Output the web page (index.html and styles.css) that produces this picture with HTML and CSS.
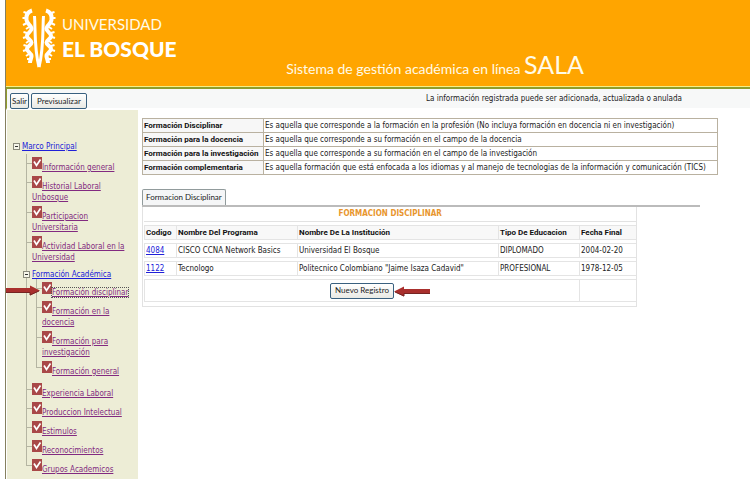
FILE: index.html
```html
<!DOCTYPE html>
<html lang="es">
<head>
<meta charset="utf-8">
<title>SALA - Universidad El Bosque</title>
<link rel="stylesheet" href="styles.css">
</head>
<body>
<svg class="defs" aria-hidden="true">
  <symbol id="check" viewBox="0 0 10 12"><rect width="10" height="12" fill="#a94848"/><path d="M2 4.5 4.5 8.5 8.5 2.5" fill="none" stroke="#fff" stroke-width="1.7"/></symbol>
  <symbol id="arrow" viewBox="0 0 36 11"><path d="M0 3H26V.5L36 5.5 26 10.5V8H0Z" fill="#a92f2d"/><path d="M0 7.5H26V10L35 6" fill="none" stroke="#752422"/></symbol>
</svg>
<div class="page">
  <header class="banner">
    <div class="brand">
      <svg class="emblem" viewBox="0 0 34 60" aria-hidden="true">
        <g id="half" fill="none" stroke="#fff" stroke-linejoin="round"><path d="M10 2.5C5 4 4 8 4.500 12C5 16 10 18 9.500 21C9 24 5 25 5 28C5 31 9.500 32 9.500 34.500C9.500 37 5 38 5 41C5 44 9.500 45 9.500 48C9.500 50 8 52 8 55" stroke-width="4"/><path d="M5 5 1.500 4M4 10 .5 10M5 15 1 17M7 19 4 21M5 25 1.500 24M4 29 1 30M7 33 4 35M5 38 1.500 37M4 42 1 43M7 46 4 48M9 51 5 51" stroke-width="2"/><path d="M12.500 8C13.500 20 12 40 17 59" stroke-width="3"/></g>
        <use href="#half" transform="translate(34 0) scale(-1 1)"/>
      </svg>
      <div class="wordmark"><span class="uni">UNIVERSIDAD</span><strong class="bosque">EL BOSQUE</strong></div>
    </div>
    <h1 class="system">Sistema de gestión académica en línea <span class="sala">SALA</span></h1>
  </header>
  <div class="toolbar">
    <button type="button" class="btn tight">Salir</button>
    <button type="button" class="btn">Previsualizar</button>
    <p class="notice">La información registrada puede ser adicionada, actualizada o anulada</p>
  </div>
  <div class="body">
    <nav class="sidebar">
      <div class="root"><span class="toggle"></span><a href="#">Marco Principal</a></div>
      <ul class="tree">
        <li><svg class="check"><use href="#check"/></svg><a href="#">Información general</a></li>
        <li><svg class="check"><use href="#check"/></svg><a href="#">Historial Laboral<br>Unbosque</a></li>
        <li><svg class="check"><use href="#check"/></svg><a href="#">Participacion<br>Universitaria</a></li>
        <li><svg class="check"><use href="#check"/></svg><a href="#">Actividad Laboral en la<br>Universidad</a></li>
        <li class="branch"><div class="branch-name"><span class="toggle"></span><a href="#">Formación Académica</a></div>
          <ul class="tree">
            <li><svg class="check"><use href="#check"/></svg><a href="#" class="current">Formación disciplinar</a><svg class="arrow to-link"><use href="#arrow"/></svg></li>
            <li><svg class="check"><use href="#check"/></svg><a href="#">Formación en la<br>docencia</a></li>
            <li><svg class="check"><use href="#check"/></svg><a href="#">Formación para<br>investigación</a></li>
            <li><svg class="check"><use href="#check"/></svg><a href="#">Formación general</a></li>
          </ul>
        </li>
        <li><svg class="check"><use href="#check"/></svg><a href="#">Experiencia Laboral</a></li>
        <li><svg class="check"><use href="#check"/></svg><a href="#">Produccion Intelectual</a></li>
        <li><svg class="check"><use href="#check"/></svg><a href="#">Estimulos</a></li>
        <li><svg class="check"><use href="#check"/></svg><a href="#">Reconocimientos</a></li>
        <li><svg class="check"><use href="#check"/></svg><a href="#">Grupos Academicos</a></li>
      </ul>
    </nav>
    <main class="content">
      <table class="info">
        <tr><th scope="row">Formación Disciplinar</th><td>Es aquella que corresponde a la formación en la profesión (No incluya formación en docencia ni en investigación)</td></tr>
        <tr><th scope="row">Formación para la docencia</th><td>Es aquella que corresponde a su formación en el campo de la docencia</td></tr>
        <tr><th scope="row">Formación para la investigación</th><td>Es aquella que corresponde a su formación en el campo de la investigación</td></tr>
        <tr><th scope="row">Formación complementaria</th><td>Es aquella formación que está enfocada a los idiomas y al manejo de tecnologias de la información y comunicación (TICS)</td></tr>
      </table>
      <div class="tabs"><button type="button" class="tab">Formacion Disciplinar</button></div>
      <section class="panel">
        <h2 class="panel-title">FORMACION DISCIPLINAR</h2>
        <table class="records">
          <colgroup><col class="c1"><col class="c2"><col class="c3"><col class="c4"><col class="c5"></colgroup>
          <thead><tr><th>Codigo</th><th>Nombre Del Programa</th><th>Nombre De La Institución</th><th>Tipo De Educacion</th><th>Fecha Final</th></tr></thead>
          <tbody>
            <tr><td><a href="#">4084</a></td><td>CISCO CCNA Network Basics</td><td>Universidad El Bosque</td><td>DIPLOMADO</td><td>2004-02-20</td></tr>
            <tr><td><a href="#">1122</a></td><td>Tecnologo</td><td>Politecnico Colombiano "Jaime Isaza Cadavid"</td><td>PROFESIONAL</td><td>1978-12-05</td></tr>
            <tr class="actions"><td colspan="4"><span class="new"><button type="button" class="btn">Nuevo Registro</button><svg class="arrow to-button"><use href="#arrow"/></svg></span></td><td></td></tr>
          </tbody>
        </table>
      </section>
    </main>
  </div>
</div>
</body>
</html>
```
FILE: styles.css
```css
* { box-sizing: border-box; }
body { margin: 0; background: #fff; color: #222; font: 8px/11px "DejaVu Sans Condensed", "DejaVu Sans", sans-serif; }
h1, h2, p, ul { margin: 0; padding: 0; font-weight: normal; }
ul { list-style: none; }
a { color: #2020d8; }
.defs { position: absolute; width: 0; height: 0; }
.page { margin-left: 5px; border-left: 1px solid #85805f; min-height: 100vh; overflow: hidden; }

.banner { display: flex; justify-content: space-between; height: 89px; padding: 8px 166px 0 16px; background: #ffa500; border-bottom: 2px solid #8f9d2c; box-shadow: inset 0 -1px #f6ef86; color: #fffbe8; }
.brand { display: flex; gap: 6px; }
.emblem { width: 34px; height: 60px; }
.wordmark { display: flex; flex-direction: column; padding-top: 6px; font-family: Lato, sans-serif; }
.uni { font-size: 15px; line-height: 20px; }
.bosque { font-size: 21px; line-height: 30px; font-weight: 900; color: #fff; }
.system { align-self: flex-start; padding-top: 39px; font: 14px/34px Lato, sans-serif; white-space: nowrap; }
.sala { font-size: 25px; }

.toolbar { display: flex; align-items: flex-start; gap: 2px; height: 21px; padding: 4px 68px 0 3px; background: #f7f8f8; border-left: 1px solid #8f9d2c; border-bottom: 2px solid #fff; }
.btn { height: 16px; padding: 0 5px; border: 1px solid #39607f; border-radius: 2px; background: linear-gradient(#fff, #e9e9e4); color: #222; font: 8px/13px Lato, sans-serif; white-space: nowrap; }
.btn.tight { padding: 0 1px; }
.notice { margin-left: auto; }

.body { display: flex; align-items: stretch; min-height: calc(100vh - 110px); }
.sidebar { flex: none; width: 131px; margin-left: 1px; padding: 31px 0 0 6px; background: #ededd6; white-space: nowrap; }
.root { display: flex; align-items: center; gap: 2px; height: 11px; margin-bottom: 5px; }
.toggle { width: 7px; height: 7px; border: 1px solid #8a8a7c; background: linear-gradient(#333, #333) center / 3px 1px no-repeat #f6f6ea; }
.tree { padding-left: 19px; }
.tree li { position: relative; padding-bottom: 3px; }
.tree li::before { content: ""; position: absolute; left: -6px; top: -3px; bottom: 3px; border-left: 1px solid #b5b5a2; }
.tree li::after { content: ""; position: absolute; left: -6px; top: 6px; width: 6px; border-top: 1px solid #b5b5a2; }
.tree li:last-child::before { bottom: auto; height: 9px; }
.tree li a { color: #822a80; }
.check { width: 10px; height: 12px; vertical-align: 1px; }
.tree .branch::before { bottom: -3px; }
.tree .branch::after { display: none; }
.branch-name { display: flex; align-items: center; gap: 2px; height: 16px; margin-left: -9px; position: relative; z-index: 1; }
.tree .branch-name a { color: #2020d8; }
.branch .tree { padding-left: 10px; }
.tree .current { outline: 1px dotted #555; }

.content { flex: 1; padding: 8px 32px 0 4px; min-width: 0; }
table { border-collapse: collapse; }
th { font: bold 8px/11px Roboto, sans-serif; color: #111; text-align: left; }
.info { width: 100%; white-space: nowrap; }
.info th, .info td { height: 14px; padding: 0 1px; border: 1px solid #b9b1a0; }
.info th { width: 121px; background: #f7f7f7; }
.tabs { display: flex; margin: 14px 18px 0 0; border-bottom: 2px solid #bbb; }
.tab { height: 16px; padding: 0 3px; border: 1px solid #919b9c; border-bottom: 0; border-radius: 2px 2px 0 0; background: #f5f6f7; color: #222; font: 8px/13px Lato, sans-serif; white-space: nowrap; }
.panel { width: 86%; border: 1px solid #e2e2e2; border-top: 0; padding: 0 0 1px 1px; }
.panel-title { height: 15px; border-bottom: 1px solid #e2e2e2; color: #e8962e; font: bold 8px/14px "DejaVu Sans Condensed", "DejaVu Sans", sans-serif; text-align: center; }
.records { width: 100%; table-layout: fixed; border-collapse: separate; border-spacing: 0 3px; white-space: nowrap; }
.records th, .records td { height: 15px; padding: 0 1px; border: 1px solid #e4e4e4; border-right: 0; }
.records th { background: #f8f8f8; }
.records .actions td { height: 23px; text-align: center; }
.c1 { width: 32px; } .c2 { width: 121px; } .c3 { width: 201px; } .c4 { width: 81px; }
.new { position: relative; display: inline-block; }
.new .btn { padding: 0 4px; display: block; }
.arrow { position: absolute; width: 36px; height: 11px; }
.to-link { right: calc(100% + 2px); top: 3px; }
.to-button { left: 100%; top: 3px; transform: scaleX(-1); }
```
